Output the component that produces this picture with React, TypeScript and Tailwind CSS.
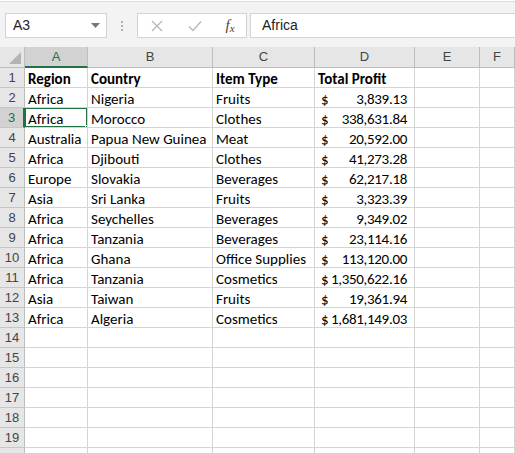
import React from 'react';

const cols = [
  { label: 'A', w: 'w-[63px]' },
  { label: 'B', w: 'w-[125px]' },
  { label: 'C', w: 'w-[102px]' },
  { label: 'D', w: 'w-[100px]' },
  { label: 'E', w: 'w-[65px]' },
  { label: 'F', w: 'flex-1' },
];

const rows: [string, string, string, string][] = [
  ['Africa', 'Nigeria', 'Fruits', '3,839.13'],
  ['Africa', 'Morocco', 'Clothes', '338,631.84'],
  ['Australia', 'Papua New Guinea', 'Meat', '20,592.00'],
  ['Africa', 'Djibouti', 'Clothes', '41,273.28'],
  ['Europe', 'Slovakia', 'Beverages', '62,217.18'],
  ['Asia', 'Sri Lanka', 'Fruits', '3,323.39'],
  ['Africa', 'Seychelles', 'Beverages', '9,349.02'],
  ['Africa', 'Tanzania', 'Beverages', '23,114.16'],
  ['Africa', 'Ghana', 'Office Supplies', '113,120.00'],
  ['Africa', 'Tanzania', 'Cosmetics', '1,350,622.16'],
  ['Asia', 'Taiwan', 'Fruits', '19,361.94'],
  ['Africa', 'Algeria', 'Cosmetics', '1,681,149.03'],
];

const cellFont = "font-['Carlito','Lato',sans-serif] text-[15px] text-black";

function RowHeader({ n, selected }: { n?: number; selected?: boolean }) {
  return (
    <div
      className={`w-[25px] shrink-0 flex items-center justify-center pt-[1px] text-[13px] font-['Liberation_Sans',sans-serif] border-b border-[#c6c6c6] ${
        selected
          ? 'bg-[#d2d2d2] text-[#217346] border-r-2 border-r-[#217346]'
          : 'bg-[#e6e6e6] text-[#444] border-r border-r-[#bdbdbd]'
      }`}
    >
      {n}
    </div>
  );
}

function Cell({ w, children, className = '' }: { w: string; children?: React.ReactNode; className?: string }) {
  return (
    <div className={`${w} shrink-0 h-full border-r border-b border-[#d4d4d4] px-[3px] pt-[3px] flex items-center overflow-hidden whitespace-nowrap ${className}`}>
      {children}
    </div>
  );
}

export default function App() {
  return (
    <div className="w-[515px] h-[453px] overflow-hidden bg-white relative">
      {/* formula bar */}
      <div className="h-[46px] bg-[#f3f3f3] border-t border-[#dcdcdc] mt-[1px] flex items-start pt-[11px] pl-[5px]">
        <div className="w-[102px] h-[25px] bg-white border border-[#d4d4d4] flex items-center justify-between pl-[7px] pr-[6px] font-['Liberation_Sans',sans-serif] text-[14px] text-[#222]">
          <span>A3</span>
          <svg width="9" height="5" viewBox="0 0 9 5"><path d="M0 0h9L4.5 5z" fill="#777" /></svg>
        </div>
        <div className="w-[30px] h-[25px] flex flex-col items-center justify-center gap-[2px]">
          <span className="w-[2px] h-[2px] bg-[#b0b0b0]" />
          <span className="w-[2px] h-[2px] bg-[#b0b0b0]" />
          <span className="w-[2px] h-[2px] bg-[#b0b0b0]" />
        </div>
        <div className="w-[110px] h-[25px] bg-white border border-[#d4d4d4] flex items-center">
          <div className="w-[38px] flex justify-center">
            <svg width="12" height="12" viewBox="0 0 12 12"><path d="M1 1l10 10M11 1L1 11" stroke="#b8b8b8" strokeWidth="1.4" /></svg>
          </div>
          <div className="w-[38px] flex justify-center">
            <svg width="14" height="12" viewBox="0 0 14 12"><path d="M1 6.5l4 4L13 1.5" stroke="#b8b8b8" strokeWidth="1.4" fill="none" /></svg>
          </div>
          <div className="flex-1 flex items-baseline justify-center font-['Liberation_Serif',serif] italic text-[15px] text-[#444] leading-none">
            <span>f</span>
            <span className="text-[11px] relative top-[2px]">x</span>
          </div>
        </div>
        <div className="ml-[3px] flex-1 h-[25px] bg-white border border-[#d4d4d4] border-r-0 flex items-center pl-[11px] font-['Liberation_Sans',sans-serif] text-[14px] text-[#222]">
          Africa
        </div>
      </div>

      {/* column headers */}
      <div className="flex h-[21px] bg-[#e6e6e6]">
        <div className="w-[25px] shrink-0 relative border-r border-b border-[#bdbdbd]">
          <svg className="absolute right-[3px] bottom-[3px]" width="12" height="12" viewBox="0 0 12 12"><path d="M12 0v12H0z" fill="#b4b4b4" /></svg>
        </div>
        {cols.map((c, i) => (
          <div
            key={c.label}
            className={`${c.w} shrink-0 flex items-center justify-center text-[13px] font-['Liberation_Sans',sans-serif] border-r border-r-[#bdbdbd] ${
              i === 0 ? 'bg-[#d2d2d2] text-[#217346] border-b-2 border-b-[#217346]' : 'text-[#444] border-b border-b-[#bdbdbd]'
            }`}
          >
            {c.label}
          </div>
        ))}
      </div>

      {/* grid */}
      <div className={cellFont}>
        <div className="flex h-[20px]">
          <RowHeader n={1} />
          <Cell w={cols[0].w} className="font-bold">Region</Cell>
          <Cell w={cols[1].w} className="font-bold">Country</Cell>
          <Cell w={cols[2].w} className="font-bold">Item Type</Cell>
          <Cell w={cols[3].w} className="font-bold">Total Profit</Cell>
          <Cell w={cols[4].w} />
          <Cell w={cols[5].w} />
        </div>
        {rows.map((r, i) => (
          <div key={i} className="flex h-[20px]">
            <RowHeader n={i + 2} selected={i === 1} />
            <Cell w={cols[0].w} className={i === 1 ? 'relative' : ''}>
              {r[0]}
              {i === 1 && (
                <>
                  <span className="absolute left-[-1px] top-[-1px] right-[-1px] bottom-[-1px] border-2 border-[#217346] pointer-events-none" />
                  <span className="absolute right-[-4px] bottom-[-4px] w-[6px] h-[6px] bg-[#217346] border border-white z-10" />
                </>
              )}
            </Cell>
            <Cell w={cols[1].w}>{r[1]}</Cell>
            <Cell w={cols[2].w}>{r[2]}</Cell>
            <Cell w={cols[3].w} className="justify-between pl-[6px] pr-[7px] gap-[2px]">
              <span>$</span>
              <span className="tracking-[-0.3px]">{r[3]}</span>
            </Cell>
            <Cell w={cols[4].w} />
            <Cell w={cols[5].w} />
          </div>
        ))}
        {[14, 15, 16, 17, 18, 19].map((n) => (
          <div key={n} className="flex h-[20px]">
            <RowHeader n={n} />
            {cols.map((c) => (
              <Cell key={c.label} w={c.w} />
            ))}
          </div>
        ))}
        <div className="flex h-[20px]">
          <RowHeader />
          {cols.map((c) => (
            <Cell key={c.label} w={c.w} />
          ))}
        </div>
      </div>
    </div>
  );
}
